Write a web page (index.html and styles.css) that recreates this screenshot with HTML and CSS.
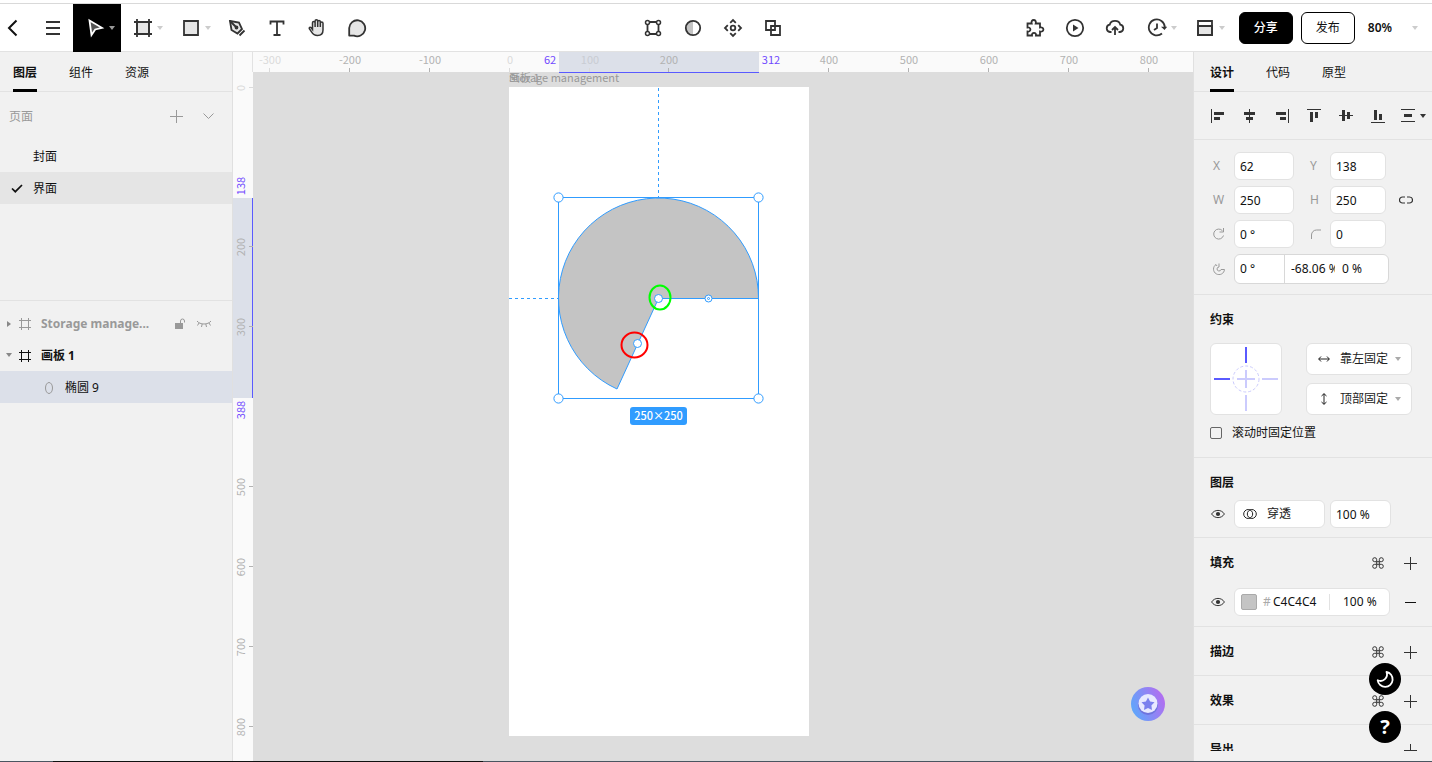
FILE: index.html
```html
<!DOCTYPE html>
<html lang="zh-CN">
<head>
<meta charset="utf-8">
<meta name="viewport" content="width=device-width, initial-scale=1">
<title>画板 1</title>
<link rel="stylesheet" href="styles.css">
</head>
<body>
<svg class="defs" aria-hidden="true">
  <symbol id="caret" viewBox="0 0 6 4"><path d="M0 0h6L3 4z"/></symbol>
  <symbol id="frame" viewBox="0 0 12 12"><path d="M2.500 0v12M9.500 0v12M0 2.500h12M0 9.500h12" fill="none" stroke="currentColor"/></symbol>
  <symbol id="plus" viewBox="0 0 13 13"><path d="M6.500 0v13M0 6.500h13" fill="none" stroke="currentColor"/></symbol>
  <symbol id="eye" viewBox="0 0 14 10"><path d="M.6 5C3.500.2 10.500.2 13.400 5 10.500 9.800 3.500 9.800.6 5z" fill="none" stroke="currentColor"/><circle cx="7" cy="5" r="2.100" fill="currentColor"/></symbol>
  <symbol id="styles" viewBox="0 0 12 12"><path d="M4.700 4.700h2.600v2.600H4.700zM4.700 4.700H2.700a2 2 0 1 1 2-2zM7.300 4.700h2a2 2 0 1 0-2-2zM4.700 7.300H2.700a2 2 0 1 0 2 2zM7.300 7.300h2a2 2 0 1 1-2 2z" fill="none" stroke="currentColor"/></symbol>
</svg>

<header class="toolbar">
  <div class="tools">
    <button class="tool back" aria-label="返回"><svg viewBox="0 0 20 20"><path d="M13.500 2.500L6 10l7.500 7.500" stroke-width="2"/></svg></button>
    <button class="tool" aria-label="菜单"><svg viewBox="0 0 20 20"><path d="M3 4h14M3 10h14M3 16h14"/></svg></button>
    <button class="tool wide active" aria-label="选择"><svg viewBox="0 0 20 20"><path class="tint" d="M4.500 2.500L17 9.800l-6.800 1.700-3.700 5.500z"/></svg><svg class="caret"><use href="#caret"/></svg></button>
    <button class="tool wide" aria-label="画板"><svg viewBox="0 0 20 20"><path class="tint" d="M4 4h12v12H4z"/><path d="M4 1v18M16 1v18M1 4h18M1 16h18"/></svg><svg class="caret"><use href="#caret"/></svg></button>
    <button class="tool wide" aria-label="矩形"><svg viewBox="0 0 20 20"><path class="tint" d="M3 3h14v14H3z"/></svg><svg class="caret"><use href="#caret"/></svg></button>
    <button class="tool" aria-label="钢笔"><svg viewBox="0 0 20 20"><path class="tint" d="M3 3l9 1.500 3 6.500-4.500 4.500L4.500 12z"/><path d="M3 3l6 6M12.500 17.500l5-5"/><circle cx="9.500" cy="9.500" r="1"/></svg></button>
    <button class="tool" aria-label="文本"><svg viewBox="0 0 20 20"><path d="M3.500 6.500v-3h13v3M10 3.500V17M6.500 17h7"/></svg></button>
    <button class="tool" aria-label="抓手"><svg viewBox="0 0 20 20"><path class="tint" stroke-width="1.500" d="M5.500 11.500V4.800a1.300 1.300 0 0 1 2.600 0V3.100a1.300 1.300 0 0 1 2.600 0v.6a1.300 1.300 0 0 1 2.600 0v1.600a1.300 1.300 0 0 1 2.700 0V12c0 3.500-2.200 5.500-5.500 5.500-3 0-4.600-1.300-6-3.600L2.300 10.700c-.4-1 .8-2 1.700-1.200zM8.100 4.500V9M10.700 3.500V9M13.300 4.500V9"/></svg></button>
    <button class="tool" aria-label="评论"><svg viewBox="0 0 20 20"><path class="tint" d="M2.200 17.600V10A8 8 0 1 1 7 17.600z" stroke-linejoin="round"/></svg></button>
  </div>
  <div class="tools">
    <button class="tool" aria-label="编辑对象"><svg viewBox="0 0 20 20"><path d="M6 4h8M6 16h8M4.500 6v8M15.500 6v8"/><g class="paper"><circle cx="4.500" cy="4.500" r="2"/><circle cx="15.500" cy="4.500" r="2"/><circle cx="4.500" cy="15.500" r="2"/><circle cx="15.500" cy="15.500" r="2"/></g></svg></button>
    <button class="tool" aria-label="蒙版"><svg viewBox="0 0 20 20"><path d="M10 3a7 7 0 0 0 0 14z" fill="#c4c4c4" stroke="none"/><circle cx="10" cy="10" r="7.200"/></svg></button>
    <button class="tool" aria-label="创建组件"><svg viewBox="0 0 20 20"><circle cx="10" cy="10" r="2.300"/><path d="M7.200 4.800L10 2l2.800 2.800M7.200 15.200L10 18l2.800-2.800M4.800 7.200L2 10l2.800 2.800M15.200 7.200L18 10l-2.800 2.800"/></svg></button>
    <button class="tool" aria-label="布尔运算"><svg viewBox="0 0 20 20"><path d="M3 3h9v9H3zM8 8h9v9H8z"/></svg></button>
  </div>
  <div class="tools end">
    <button class="tool" aria-label="插件"><svg viewBox="0 0 20 20"><path d="M2.500 5.500h4.200c-.6-1.900.3-3.500 2-3.500s2.600 1.600 2 3.500h4.300v4c1.900-.5 3.400.4 3.400 2s-1.500 2.500-3.400 2v4h-4c.3-1.500-.6-2.600-2-2.600s-2.300 1.100-2 2.600H2.500v-4c1.700.3 2.900-.6 2.900-2s-1.200-2.300-2.900-2z"/></svg></button>
    <button class="tool" aria-label="演示"><svg viewBox="0 0 20 20"><circle cx="10" cy="10" r="8.200"/><path d="M8 6.500v7l5.500-3.500z" fill="currentColor" stroke="none"/></svg></button>
    <button class="tool" aria-label="上传"><svg viewBox="0 0 20 20"><path d="M6.500 14H5a3.700 3.700 0 0 1-.3-7.300c1.300-5 9.300-5 10.600 0A3.700 3.700 0 0 1 15 14h-1.500M10 17V9.500M7 12l3-3 3 3"/></svg></button>
    <button class="tool wide" aria-label="历史"><svg viewBox="0 0 20 20"><path d="M15 15.500A8 8 0 1 1 17.800 9M10 5.500V10l-3 2"/><path d="M14 8.800h6.200L17.500 12z" fill="currentColor" stroke="none"/></svg><svg class="caret"><use href="#caret"/></svg></button>
    <button class="tool wide" aria-label="布局"><svg viewBox="0 0 20 20"><path class="tint" d="M3 8h14v9H3z"/><path d="M3 3h14v14H3z"/></svg><svg class="caret"><use href="#caret"/></svg></button>
    <button class="action primary">分享</button>
    <button class="action">发布</button>
    <button class="zoom">80%<svg class="caret"><use href="#caret"/></svg></button>
  </div>
</header>

<main class="editor">
  <aside class="panel left">
    <nav class="tabs"><button class="tab current">图层</button><button class="tab">组件</button><button class="tab">资源</button></nav>
    <section class="pages">
      <div class="pages-head"><span>页面</span>
        <button class="icon-btn" aria-label="新建页面"><svg class="s13"><use href="#plus"/></svg></button>
        <button class="icon-btn" aria-label="折叠"><svg class="chevron" viewBox="0 0 11 7"><path d="M.5.500l5 5 5-5" fill="none" stroke="currentColor"/></svg></button>
      </div>
      <div class="row page">封面</div>
      <div class="row page chosen"><svg class="check" viewBox="0 0 12 9"><path d="M1 4.500L4.300 7.700 11 1" fill="none" stroke="currentColor" stroke-width="1.700"/></svg>界面</div>
    </section>
    <section class="layers">
      <div class="row layer hidden-layer"><svg class="twist" viewBox="0 0 6 6"><path d="M1 0l4 3-4 3z"/></svg><svg class="s12"><use href="#frame"/></svg><strong>Storage manage...</strong>
        <button class="mini" aria-label="锁定"><svg class="s12" viewBox="0 0 12 12"><path d="M1 5h8v6H1z" fill="currentColor"/><path d="M6.500 5V3a2 2 0 0 1 4 0v1.500" fill="none" stroke="currentColor"/></svg></button>
        <button class="mini" aria-label="显示"><svg class="lash" viewBox="0 0 16 8"><path d="M1 1c3 4 11 4 14 0M3 3L1.500 5.500M6.200 4L5.500 7M9.800 4l.7 3M13 3l1.500 2.500" fill="none" stroke="currentColor"/></svg></button></div>
      <div class="row layer"><svg class="twist" viewBox="0 0 6 6"><path d="M0 0h6L3 4z"/></svg><svg class="s12"><use href="#frame"/></svg><strong>画板 1</strong></div>
      <div class="row layer child picked"><svg class="s12" viewBox="0 0 12 12"><ellipse cx="6" cy="6" rx="3.500" ry="5.500" fill="none" stroke="#999"/></svg><span>椭圆 9</span></div>
    </section>
  </aside>

  <section class="workspace">
    <div class="corner"></div>
    <svg class="ruler top">
      <rect class="range" x="306" width="200" height="20"/><path class="edge" d="M306 20.500h200"/>
      <path class="tick faint" d="M16.500 16v4M256.500 16v4M336.500 16v4"/>
      <path class="tick" d="M96.500 16v4M176.500 16v4M415.500 16v4M575.500 16v4M655.500 16v4M735.500 16v4M815.500 16v4M895.500 16v4"/>
      <g class="faint"><text x="17" y="12">-300</text><text x="257" y="12">0</text><text class="inside" x="337" y="12">100</text></g>
      <text x="97" y="12">-200</text><text x="177" y="12">-100</text><text x="416" y="12">200</text><text x="576" y="12">400</text><text x="656" y="12">500</text><text x="736" y="12">600</text><text x="816" y="12">700</text><text x="896" y="12">800</text>
      <g class="mark"><text x="297" y="12">62</text><text x="518" y="12">312</text></g>
    </svg>
    <svg class="ruler side">
      <rect class="range" y="126" width="20" height="200"/><path class="edge" d="M19.500 126v200"/>
      <path class="tick faint" d="M16 15.500h4"/>
      <path class="tick" d="M16 174.500h4M16 254.500h4M16 414.500h4M16 494.500h4M16 574.500h4M16 654.500h4"/>
      <text class="faint" transform="translate(12 16) rotate(-90)">0</text>
      <text transform="translate(12 175) rotate(-90)">200</text><text transform="translate(12 255) rotate(-90)">300</text><text transform="translate(12 415) rotate(-90)">500</text><text transform="translate(12 495) rotate(-90)">600</text><text transform="translate(12 575) rotate(-90)">700</text><text transform="translate(12 655) rotate(-90)">800</text>
      <g class="mark"><text transform="translate(12 114) rotate(-90)">138</text><text transform="translate(12 338) rotate(-90)">388</text></g>
    </svg>
    <div class="stage">
      <svg class="scene">
        <g transform="translate(256 15)">
          <text class="board-name" y="-5">Storage management</text>
          <text class="board-name" y="-5">画板 1</text>
          <rect class="board" width="300" height="649"/>
          <path class="guide" d="M149.500 1v109M0 211.500h49"/>
          <path class="shape" d="M149.500 211.500L108 302A100 100 0 1 1 249.500 211.500z"/>
          <rect class="outline" x="49.500" y="110.500" width="200" height="201"/>
          <g class="handle">
            <circle cx="49.500" cy="110.500" r="4.600"/><circle cx="249.500" cy="110.500" r="4.600"/><circle cx="49.500" cy="311.500" r="4.600"/><circle cx="249.500" cy="311.500" r="4.600"/>
            <circle cx="149.500" cy="211.500" r="4"/><circle cx="128.500" cy="256.500" r="4"/><circle cx="199.500" cy="211.500" r="3.500"/><circle cx="199.500" cy="211.500" r="1"/>
          </g>
          <ellipse class="note green" cx="151" cy="210.500" rx="10.500" ry="12"/>
          <ellipse class="note red" cx="125.500" cy="258" rx="13" ry="12.500"/>
          <rect class="size-tag" x="121" y="320" width="57" height="18" rx="3"/>
          <text class="size-text" x="149.500" y="333">250×250</text>
        </g>
      </svg>
      <button class="assistant" aria-label="助手"><svg viewBox="0 0 34 34"><defs><linearGradient id="orb" x1="0" y1=".7" x2="1" y2=".3"><stop stop-color="#5ca8fb"/><stop offset="1" stop-color="#b56cf0"/></linearGradient></defs><circle cx="17" cy="17" r="17" fill="url(#orb)"/><circle cx="17" cy="18" r="10" fill="#6f74dd"/><circle cx="17" cy="16.500" r="9.500" fill="#e8e9ff"/><path d="M17 10.500l2.100 4 4.400.8-3.100 3.200.6 4.500-4-2-4 2 .6-4.500-3.100-3.200 4.400-.8z" fill="#7b80ee"/></svg></button>
    </div>
  </section>

  <aside class="panel right">
    <nav class="tabs"><button class="tab current">设计</button><button class="tab">代码</button><button class="tab">原型</button></nav>
    <div class="inspector">
      <div class="align">
        <button aria-label="左对齐"><svg viewBox="0 0 16 16"><path class="ln" d="M1.500 1v14"/><path d="M4 4h10v3H4zM4 9h6v3H4z"/></svg></button>
        <button aria-label="水平居中"><svg viewBox="0 0 16 16"><path class="ln" d="M7.500 1v14"/><path d="M2 4h11v3H2zM4 9h7v3H4z"/></svg></button>
        <button aria-label="右对齐"><svg viewBox="0 0 16 16"><path class="ln" d="M14.500 1v14"/><path d="M2 4h10v3H2zM6 9h6v3H6z"/></svg></button>
        <button aria-label="顶对齐"><svg viewBox="0 0 16 16"><path class="ln" d="M1 1.500h14"/><path d="M4 4h3v10H4zM9 4h3v6H9z"/></svg></button>
        <button aria-label="垂直居中"><svg viewBox="0 0 16 16"><path class="ln" d="M1 7.500h14"/><path d="M4 2h3v11H4zM9 4h3v7H9z"/></svg></button>
        <button aria-label="底对齐"><svg viewBox="0 0 16 16"><path class="ln" d="M1 14.500h14"/><path d="M4 2h3v10H4zM9 6h3v6H9z"/></svg></button>
        <button class="spread" aria-label="分布"><svg viewBox="0 0 16 16"><path class="ln" d="M1 1.500h14M1 13.500h14"/><path d="M4 6h8v3H4z"/></svg><svg class="caret"><use href="#caret"/></svg></button>
      </div>

      <section class="block geometry">
        <label for="x">X</label><input id="x" value="62"><label for="y">Y</label><input id="y" value="138"><span></span>
        <label for="w">W</label><input id="w" value="250"><label for="h">H</label><input id="h" value="250">
        <button class="link" aria-label="锁定比例"><svg viewBox="0 0 14 8"><path d="M6 7H3.500a3 3 0 0 1 0-6H6M8 1h2.500a3 3 0 0 1 0 6H8" fill="none" stroke="#333" stroke-width="1.200"/></svg></button>
        <label for="rot" aria-label="旋转"><svg class="s12" viewBox="0 0 12 12"><path d="M10.500 7.500A5 5 0 1 1 9.500 2.800M10.500 0v4h-4" fill="none" stroke="currentColor"/></svg></label><input id="rot" value="0 °">
        <label for="rad" aria-label="圆角"><svg class="s12" viewBox="0 0 12 12"><path d="M1.500 11V7a5 5 0 0 1 5-5H11" fill="none" stroke="currentColor"/></svg></label><input id="rad" value="0"><span></span>
        <label for="arc" aria-label="弧度"><svg class="s12" viewBox="0 0 12 12"><path d="M6 .5V4a2 2 0 1 0 2 2.500h3.500A5.500 5.500 0 1 1 3 1.500L4 3" fill="none" stroke="currentColor"/></svg></label>
        <div class="triple"><input id="arc" value="0 °"><input aria-label="扫描" value="-68.06 %"><input aria-label="比例" value="0 %"></div>
      </section>

      <section class="block constraints">
        <h2>约束</h2>
        <div class="constraint-grid">
          <svg class="cross" viewBox="0 0 70 70"><path d="M35 3v16M3 35h16" stroke="#5a5aff"/><path d="M35 51v16M51 35h16M35 26v18M26 35h18" stroke="#cbcbfd"/><circle cx="35" cy="35" r="13" fill="none" stroke="#cbcbfd" stroke-width="1" stroke-dasharray="3 2"/></svg>
          <div class="picks">
            <div class="pick"><svg class="s12" viewBox="0 0 12 12"><path d="M.7 6h10.600M3 3.500L.7 6 3 8.500M9 3.500L11.300 6 9 8.500" fill="none" stroke="currentColor"/></svg><select aria-label="水平约束"><option>靠左固定</option></select><svg class="caret"><use href="#caret"/></svg></div>
            <div class="pick"><svg class="s12" viewBox="0 0 12 12"><path d="M6 .7v10.600M3.500 3L6 .7 8.500 3M3.500 9L6 11.300 8.500 9" fill="none" stroke="currentColor"/></svg><select aria-label="垂直约束"><option>顶部固定</option></select><svg class="caret"><use href="#caret"/></svg></div>
          </div>
        </div>
        <label class="fix"><input type="checkbox">滚动时固定位置</label>
      </section>

      <section class="block opacity">
        <h2>图层</h2>
        <div class="line"><button class="eye" aria-label="可见性"><svg><use href="#eye"/></svg></button>
          <div class="pick blend"><svg viewBox="0 0 14 12"><circle cx="5.200" cy="6" r="4.500" fill="none" stroke="currentColor"/><circle cx="8.800" cy="6" r="4.500" fill="none" stroke="currentColor"/></svg><select aria-label="混合模式"><option>穿透</option></select></div>
          <input class="pct" aria-label="不透明度" value="100 %"></div>
      </section>

      <section class="block fill">
        <div class="head"><h2>填充</h2><button aria-label="填充样式"><svg class="s12"><use href="#styles"/></svg></button><button aria-label="添加填充"><svg class="s13"><use href="#plus"/></svg></button></div>
        <div class="line"><button class="eye" aria-label="填充可见性"><svg><use href="#eye"/></svg></button>
          <div class="paint"><button class="swatch" aria-label="颜色"></button><label for="hex">#</label><input id="hex" value="C4C4C4"><input class="alpha" aria-label="填充不透明度" value="100 %"></div>
          <button class="minus" aria-label="移除填充"><svg class="s13" viewBox="0 0 13 13"><path d="M1 6.500h11" stroke="#111"/></svg></button></div>
      </section>

      <section class="block slim"><div class="head"><h2>描边</h2><button aria-label="描边样式"><svg class="s12"><use href="#styles"/></svg></button><button aria-label="添加描边"><svg class="s13"><use href="#plus"/></svg></button></div></section>
      <section class="block slim"><div class="head"><h2>效果</h2><button aria-label="效果样式"><svg class="s12"><use href="#styles"/></svg></button><button aria-label="添加效果"><svg class="s13"><use href="#plus"/></svg></button></div></section>
      <section class="block slim"><div class="head"><h2>导出</h2><button aria-label="添加导出"><svg class="s13"><use href="#plus"/></svg></button></div></section>
    </div>
    <div class="floaters">
      <button aria-label="深色模式"><svg viewBox="0 0 18 18"><path d="M10.500 2a6.500 6.500 0 0 1-8.800 8.300A7.500 7.500 0 1 0 10.500 2z" fill="none" stroke="#fff" stroke-width="1.800" stroke-linejoin="round"/></svg></button>
      <button>?</button>
    </div>
  </aside>
</main>
<div class="taskbar"></div>
</body>
</html>
```
FILE: styles.css
```css
* { box-sizing: border-box; }

body {
  margin: 0;
  height: 100vh;
  display: flex;
  flex-direction: column;
  overflow: hidden;
  background: #fff;
  color: #111;
  font: 12px/16px "Noto Sans", "Noto Sans CJK SC", sans-serif;
}

button, input, select {
  font: inherit;
  color: inherit;
  margin: 0;
  padding: 0;
  border: 0;
  background: none;
  border-radius: 0;
}

button { display: inline-flex; align-items: center; justify-content: center; }
svg { display: block; flex: none; }
.defs { position: absolute; width: 0; height: 0; }
.s12 { width: 12px; height: 12px; }
.s13 { width: 13px; height: 13px; }
.caret { width: 6px; height: 4px; fill: #ccc; }

/* Toolbar */
.toolbar {
  flex: none;
  display: grid;
  grid-template-columns: 1fr auto 1fr;
  height: 49px;
  margin-top: 3px;
  padding-right: 6px;
  border-top: 1px solid #d9d9d9;
  border-bottom: 1px solid #e2e2e2;
}
.tools { display: flex; align-items: center; }
.tools.end { justify-content: flex-end; }
.tool { width: 40px; height: 48px; color: #333; }
.tool svg:first-child { width: 20px; height: 20px; fill: none; stroke: currentColor; stroke-width: 1.8; }
.tool .tint { fill: #e6e6e6; }
.tool .paper { fill: #fff; stroke-width: 1.500; }
.tool.back { width: 33px; padding-right: 7px; color: #111; }
.tool.wide { width: 48px; gap: 4px; padding-left: 6px; }
.tool.active { background: #000; color: #fff; }
.tool.active .tint { fill: #555; }
.tool.active .caret { fill: #999; }
.action {
  width: 54px;
  height: 32px;
  margin-left: 8px;
  border: 1px solid #000;
  border-radius: 6px;
}
.action.primary { background: #000; color: #fff; font-weight: 500; }
.zoom { height: 32px; margin-left: 13px; padding-right: 8px; gap: 20px; font-weight: 600; }

/* Frame of the editor */
.editor { flex: 1; min-height: 0; display: grid; grid-template-columns: 233px 1fr 239px; }
.panel { position: relative; min-height: 0; display: flex; flex-direction: column; background: #f1f1f1; }
.panel.left { border-right: 1px solid #e0e0e0; }
.panel.right { border-left: 1px solid #e0e0e0; }
.tabs { flex: none; display: flex; gap: 32px; height: 40px; padding-left: 13px; border-bottom: 1px solid #e2e2e2; }
.right .tabs { padding-left: 16px; }
.tab { width: 24px; height: 40px; border-bottom: 3px solid transparent; padding-top: 5px; white-space: nowrap; }
.tab.current { font-weight: 700; border-bottom-color: #000; }

/* Pages and layers */
.pages { height: 209px; border-bottom: 1px solid #e2e2e2; }
.pages-head { display: flex; align-items: center; height: 48px; padding: 0 8px 0 9px; color: #999; }
.pages-head span { flex: 1; padding-top: 2px; }
.icon-btn { width: 32px; height: 32px; }
.chevron { width: 11px; height: 7px; }
.row { position: relative; display: flex; align-items: center; height: 32px; padding-top: 2px; }
.page { padding-left: 33px; }
.chosen { background: #e5e5e5; }
.check { position: absolute; left: 11px; width: 12px; height: 9px; top: 12px; }
.layers { padding-top: 6px; }
.layer { padding: 1px 20px 0 6px; }
.twist { width: 6px; height: 6px; margin-right: 7px; fill: #888; }
.layer strong { flex: 1; margin-left: 10px; font-weight: 700; white-space: nowrap; }
.hidden-layer { color: #999; }
.mini { margin-left: 8px; }
.lash { width: 16px; height: 8px; margin-left: 2px; }
.child { padding-left: 43px; }
.child span { margin-left: 10px; }
.picked { background: #dce0e9; }

/* Canvas */
.workspace { display: grid; grid-template: 20px 1fr / 20px 1fr; min-width: 0; min-height: 0; background: #fafafa; }
.corner { border-right: 1px solid #e2e2e2; }
.ruler { position: relative; width: 100%; height: 100%; overflow: hidden; }
.ruler.top { z-index: 1; height: 21px; }
.ruler text { fill: #b2b2b2; font: 11px "Noto Sans CJK SC", sans-serif; text-anchor: middle; }
.ruler .faint text, .ruler text.faint { fill: #dadada; }
.ruler .faint .inside { fill: #c9ccd3; }
.ruler .mark text { fill: #7048ff; }
.range { fill: #dce0e9; }
.edge { stroke: #5a5aff; }
.tick { stroke: #b2b2b2; }
.tick.faint { stroke: #dadada; }
.stage { position: relative; overflow: hidden; background: #ddd; }
.scene { width: 100%; height: 100%; }
.board-name { fill: #999; font: 11px "Noto Sans CJK SC", sans-serif; }
.board { fill: #fff; }
.guide { stroke: #309cff; stroke-dasharray: 3 3; }
.shape { fill: #c4c4c4; stroke: #309cff; }
.outline { fill: none; stroke: #309cff; }
.handle { fill: #fff; stroke: #309cff; }
.note { fill: none; stroke-width: 2; }
.green { stroke: #0f0; }
.red { stroke: #f00; }
.size-tag { fill: #309cff; }
.size-text { fill: #fff; font: 500 11px "Noto Sans CJK SC", sans-serif; text-anchor: middle; }
.assistant { position: absolute; right: 28px; bottom: 40px; }
.assistant svg { width: 34px; height: 34px; }

/* Inspector */
.inspector { flex: 1; min-height: 0; margin-bottom: 10px; overflow: hidden; }
.align { display: flex; height: 48px; padding-left: 8px; border-bottom: 1px solid #e2e2e2; }
.align button { width: 32px; color: #333; }
.align svg:first-child { width: 16px; height: 16px; fill: currentColor; }
.align .ln { stroke: currentColor; }
.align .spread { width: 38px; gap: 4px; }
.align .spread .caret { fill: #333; }
.block { border-bottom: 1px solid #e2e2e2; padding-left: 16px; }
.block h2 { margin: 0; font-size: 12px; line-height: 16px; font-weight: 700; }

.geometry {
  display: grid;
  grid-template-columns: 24px 60px 36px 56px 1fr;
  row-gap: 6px;
  align-items: center;
  padding-top: 12px;
  padding-bottom: 10px;
}
.geometry label { color: #999; padding-left: 3px; }
.geometry input + label { padding-left: 16px; }
.geometry > input, .pct { height: 28px; min-width: 0; padding-left: 5px; border: 1px solid #e2e2e2; border-radius: 6px; background: #fff; }
.link { justify-self: center; margin-right: 6px; }
.link svg { width: 14px; height: 8px; }
.triple {
  grid-column: 2 / 5;
  display: grid;
  grid-template-columns: 50px 52px 1fr;
  height: 30px;
  overflow: hidden;
  border: 1px solid #d8d8d8;
  border-radius: 6px;
  background: #fff;
}
.triple { margin-right: -3px; }
.triple input { min-width: 0; padding-left: 5px; }
.triple input:first-child { border-right: 1px solid #d8d8d8; }
.triple input:nth-child(2) { padding-left: 6px; padding-right: 2px; }

.constraints { padding-top: 17px; padding-bottom: 16px; }
.constraint-grid { display: flex; gap: 24px; margin-top: 15px; }
.cross { width: 72px; height: 72px; border: 1px solid #e2e2e2; border-radius: 6px; background: #fff; stroke-width: 2; }
.picks { display: grid; gap: 8px; }
.pick { display: flex; align-items: center; width: 106px; height: 32px; padding: 0 10px 0 11px; border: 1px solid #e2e2e2; border-radius: 6px; background: #fff; color: #222; }
.pick select { flex: 1; min-width: 0; height: 20px; margin-left: 10px; appearance: none; }
.pick .caret { fill: #aaa; }
.fix { display: flex; align-items: center; gap: 10px; margin-top: 10px; }
.fix input { appearance: none; width: 12px; height: 12px; border: 1px solid #666; border-radius: 2px; }

.opacity { padding-top: 17px; padding-bottom: 9px; }
.line { display: flex; align-items: center; margin-top: 9px; }
.eye { width: 16px; height: 28px; margin-right: 8px; color: #333; }
.eye svg { width: 14px; height: 10px; }
.blend { width: 91px; height: 28px; padding: 0 8px; }
.blend svg { width: 14px; height: 12px; }
.pct { width: 61px; margin-left: 5px; }

.head { display: flex; align-items: center; gap: 20px; padding-right: 15px; }
.head h2 { flex: 1; }
.head button { color: #333; }
.fill { padding-top: 17px; padding-bottom: 10px; }
.fill .line { margin-top: 17px; }
.paint { display: flex; align-items: center; width: 156px; height: 28px; padding-left: 6px; border: 1px solid #e2e2e2; border-radius: 6px; background: #fff; }
.swatch { width: 16px; height: 16px; margin-right: 6px; border: 1px solid #aaa; border-radius: 2px; background: #c4c4c4; }
.paint label { width: 10px; color: #aaa; }
.paint input { min-width: 0; width: 56px; }
.paint .alpha { height: 16px; flex: 1; padding-left: 13px; border-left: 1px solid #e2e2e2; }
.minus { margin-left: 14px; }
.slim { padding-top: 17px; padding-bottom: 15px; }

.floaters { position: absolute; right: 31px; bottom: 18px; display: grid; gap: 16px; }
.floaters button { width: 32px; height: 32px; border-radius: 50%; background: #000; color: #fff; font-size: 20px; font-weight: 700; }
.floaters svg { width: 18px; height: 18px; }

.taskbar { flex: none; height: 1px; background: linear-gradient(90deg, #4a5560 0 53px, #111 53px 483px, #4a5560 483px); }
```
